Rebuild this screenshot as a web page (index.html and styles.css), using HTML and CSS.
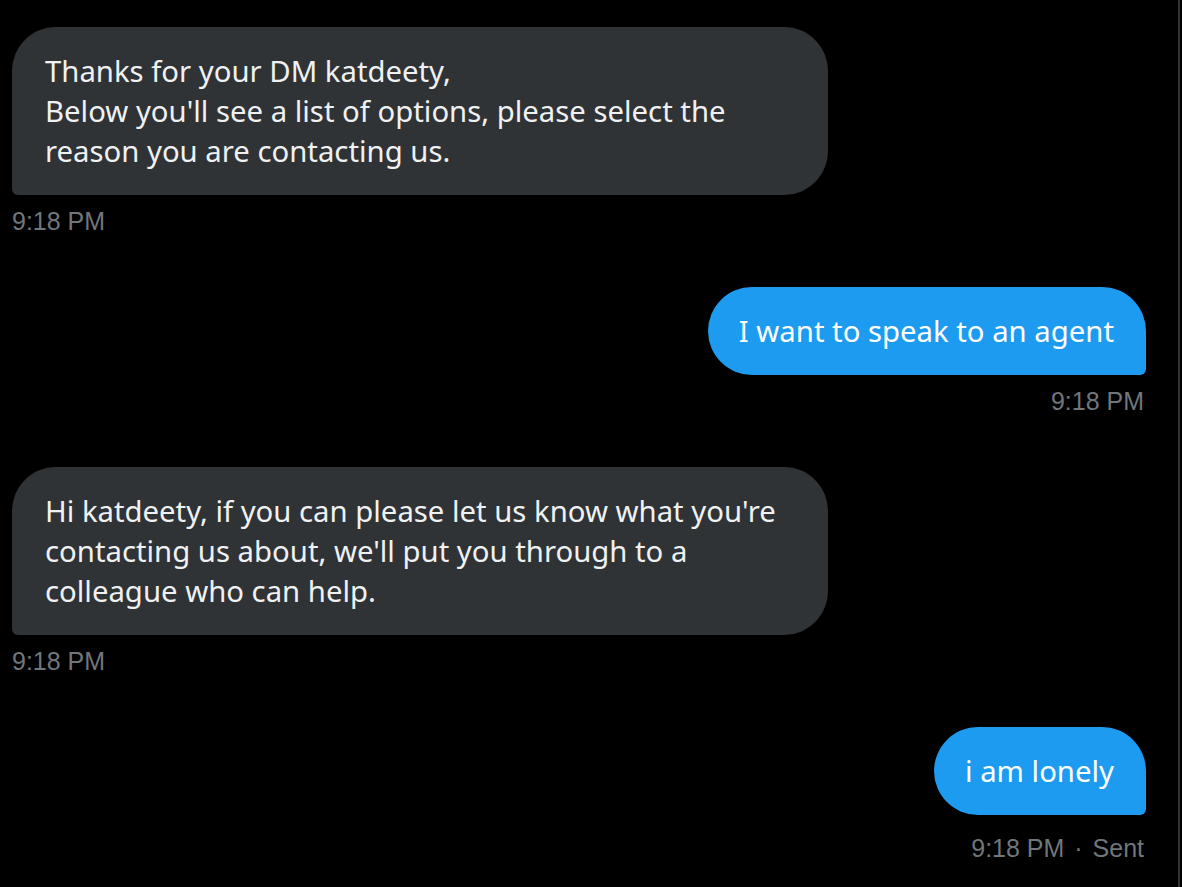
FILE: index.html
```html
<!DOCTYPE html>
<html lang="en">
<head>
<meta charset="utf-8">
<title>Messages</title>
<link rel="stylesheet" href="styles.css">
</head>
<body>
<main class="thread">
  <div class="group in">
    <div class="bubble">Thanks for your DM katdeety,<br>Below you'll see a list of options, please select the<br>reason you are contacting us.</div>
    <div class="meta">9:18 PM</div>
  </div>
  <div class="group out">
    <div class="bubble">I want to speak to an agent</div>
    <div class="meta">9:18 PM</div>
  </div>
  <div class="group in">
    <div class="bubble">Hi katdeety, if you can please let us know what you're<br>contacting us about, we'll put you through to a<br>colleague who can help.</div>
    <div class="meta">9:18 PM</div>
  </div>
  <div class="group out last">
    <div class="bubble">i am lonely</div>
    <div class="meta">9:18 PM <span class="dot">·</span> Sent</div>
  </div>
</main>
</body>
</html>
```

FILE: styles.css
```css
html, body {
  margin: 0;
  padding: 0;
  background: #000;
}

.thread {
  width: 1180px;
  height: 887px;
  box-sizing: border-box;
  border-right: 2px solid #2f3336;
  padding: 27px 32px 0 12px;
  display: flex;
  flex-direction: column;
  gap: 52px;
  font-family: "Noto Sans", "Open Sans", sans-serif;
}

.group {
  display: flex;
  flex-direction: column;
}

.group.in {
  align-items: flex-start;
}

.group.out {
  align-items: flex-end;
}

.bubble {
  box-sizing: border-box;
  padding: 24px 33px;
  font-size: 29.3px;
  line-height: 40px;
  color: #eff1f2;
  white-space: nowrap;
}

.group.in .bubble {
  width: 816px;
  background: #2f3336;
  border-radius: 44px 44px 44px 6px;
}

.group.out .bubble {
  padding: 24px 32px 24px 31px;
  background: #1d9bf0;
  color: #fff;
  border-radius: 44px 44px 6px 44px;
}

.meta {
  margin-top: 12px;
  font-family: "Liberation Sans", Arial, sans-serif;
  font-size: 25px;
  line-height: 28px;
  color: #71767b;
}

.group.out .meta {
  padding-right: 2px;
}

.group.last .meta {
  margin-top: 19px;
}

.dot {
  margin: 0 3px;
}
```
